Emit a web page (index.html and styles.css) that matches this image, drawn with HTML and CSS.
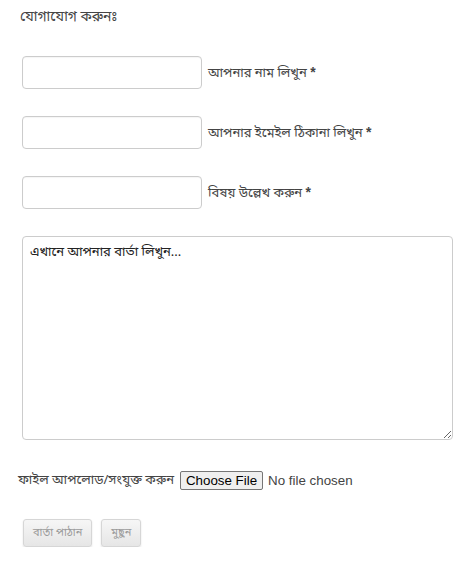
FILE: index.html
```html
<!DOCTYPE html>
<html lang="bn">
<head>
<meta charset="utf-8">
<link rel="stylesheet" href="styles.css">
</head>
<body>
<div class="page">
  <h2 class="title">যোগাযোগ করুনঃ</h2>
  <form class="form">
    <div class="row">
      <input class="field" type="text">
      <label class="label">আপনার নাম লিখুন <span class="req">*</span></label>
    </div>
    <div class="row">
      <input class="field" type="text">
      <label class="label">আপনার ইমেইল ঠিকানা লিখুন <span class="req">*</span></label>
    </div>
    <div class="row">
      <input class="field" type="text">
      <label class="label">বিষয় উল্লেখ করুন <span class="req">*</span></label>
    </div>
    <textarea class="message">এখানে আপনার বার্তা লিখুন...</textarea>
    <div class="file-row">
      <span class="file-label">ফাইল আপলোড/সংযুক্ত করুন</span>
      <input class="file" type="file">
    </div>
    <div class="actions">
      <button type="button" class="btn">বার্তা পাঠান</button>
      <button type="button" class="btn">মুছুন</button>
    </div>
  </form>
</div>
</body>
</html>
```

FILE: styles.css
```css
html, body {
  margin: 0;
  padding: 0;
  background: #ffffff;
}
.page {
  font-family: "Noto Sans Bengali", "Lohit Bengali", "Vrinda", "Noto Sans", "DejaVu Sans", sans-serif;
  color: #444444;
  font-size: 13px;
  padding: 8px 0 0 20px;
}
.title {
  margin: 0;
  font-size: 14px;
  font-weight: normal;
  line-height: 20px;
  color: #444444;
}
.form {
  display: flex;
  flex-direction: column;
  padding-left: 2px;
  margin-top: 28px;
}
.row {
  display: flex;
  align-items: center;
  gap: 6px;
  height: 33px;
  margin-bottom: 27px;
}
.field {
  box-sizing: border-box;
  width: 180px;
  height: 33px;
  margin: 0;
  border: 1px solid #cccccc;
  border-radius: 4px;
  box-shadow: inset 0 1px 1px rgba(0,0,0,0.04);
  background: #ffffff;
  padding: 4px 8px;
}
.label {
  font-size: 13px;
  color: #444444;
}
.req {
  font-family: "Liberation Sans", Arial, sans-serif;
  font-weight: bold;
  font-size: 14px;
  color: #444444;
}
.message {
  box-sizing: border-box;
  width: 431px;
  height: 204px;
  margin: 0;
  border: 1px solid #cccccc;
  border-radius: 4px;
  padding: 7px 7px;
  font-family: "Noto Sans Bengali", "Lohit Bengali", "Vrinda", "Noto Sans", sans-serif;
  font-size: 13px;
  color: #222222;
  resize: both;
  display: block;
}
.file-row {
  display: flex;
  align-items: center;
  gap: 6px;
  margin-top: 29px;
  margin-left: -4px;
  height: 22px;
}
.file-label {
  font-size: 13px;
  color: #444444;
}
.file {
  font-family: "Liberation Sans", Arial, sans-serif;
  font-size: 13.33px;
  color: #444444;
}
.file::file-selector-button {
  font-family: "Liberation Sans", Arial, sans-serif;
  font-size: 13.33px;
  height: 19px;
  padding: 0 5px;
  margin-right: 5px;
  border: 1px solid #767676;
  border-radius: 2px;
  background: #efefef;
  color: #000000;
}
.actions {
  display: flex;
  gap: 9px;
  margin-top: 28px;
  margin-left: 1px;
}
.btn {
  box-sizing: border-box;
  height: 28px;
  padding: 0 9px;
  border: 1px solid #d6d6d6;
  border-radius: 3px;
  background: linear-gradient(#f6f6f6, #e6e6e6);
  box-shadow: 0 1px 2px rgba(0,0,0,0.12);
  color: #9a9a9a;
  font-family: "Noto Sans Bengali", "Lohit Bengali", "Vrinda", "Noto Sans", sans-serif;
  font-size: 11px;
}
```
